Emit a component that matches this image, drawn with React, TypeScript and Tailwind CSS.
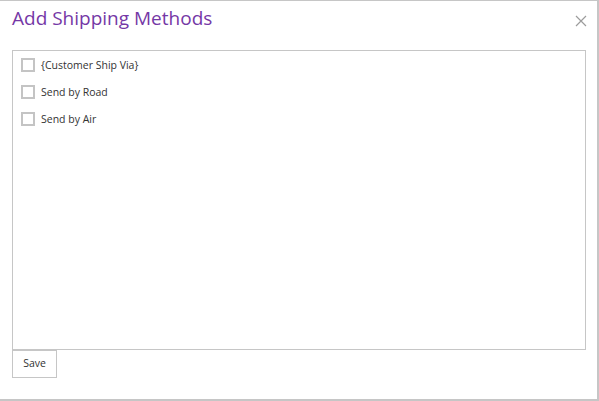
import React from "react";

const methods = ["{Customer Ship Via}", "Send by Road", "Send by Air"];

const App = () => {
  return (
    <div
      className="h-[401px] w-[599px] bg-white"
      style={{ fontFamily: '"Open Sans", "Noto Sans", sans-serif' }}
    >
      <div className="flex h-[401px] w-[599px] flex-col border-t border-r-2 border-b-2 border-[#c6c6c6] pl-3 pr-[11px]">
        <div className="flex h-[49px] items-start justify-between">
          <h1 className="mt-[4px] text-[19px] leading-[26px] text-[#7538a6]">
            Add Shipping Methods
          </h1>
          <button className="mt-[14px] mr-[-1px] text-[#9c9c9c]">
            <svg width="12" height="12" viewBox="0 0 12 12">
              <path d="M1 1L11 11M11 1L1 11" stroke="currentColor" strokeWidth="1.2" />
            </svg>
          </button>
        </div>
        <div className="flex h-[300px] flex-col border border-[#c6c6c6] px-2 pt-[7px]">
          {methods.map((m) => (
            <label key={m} className="flex h-[27px] items-start gap-[6px]">
              <span className="h-[14px] w-[14px] border-2 border-[#c4c4c4] bg-white" />
              <span className="-mt-[1px] text-[10.5px] leading-[16px] text-[#333]">{m}</span>
            </label>
          ))}
        </div>
        <div className="-mt-px">
          <button className="h-[28px] w-[45px] border border-[#c6c6c6] bg-white text-[10.5px] text-[#333]">
            Save
          </button>
        </div>
      </div>
    </div>
  );
};

export default App;
